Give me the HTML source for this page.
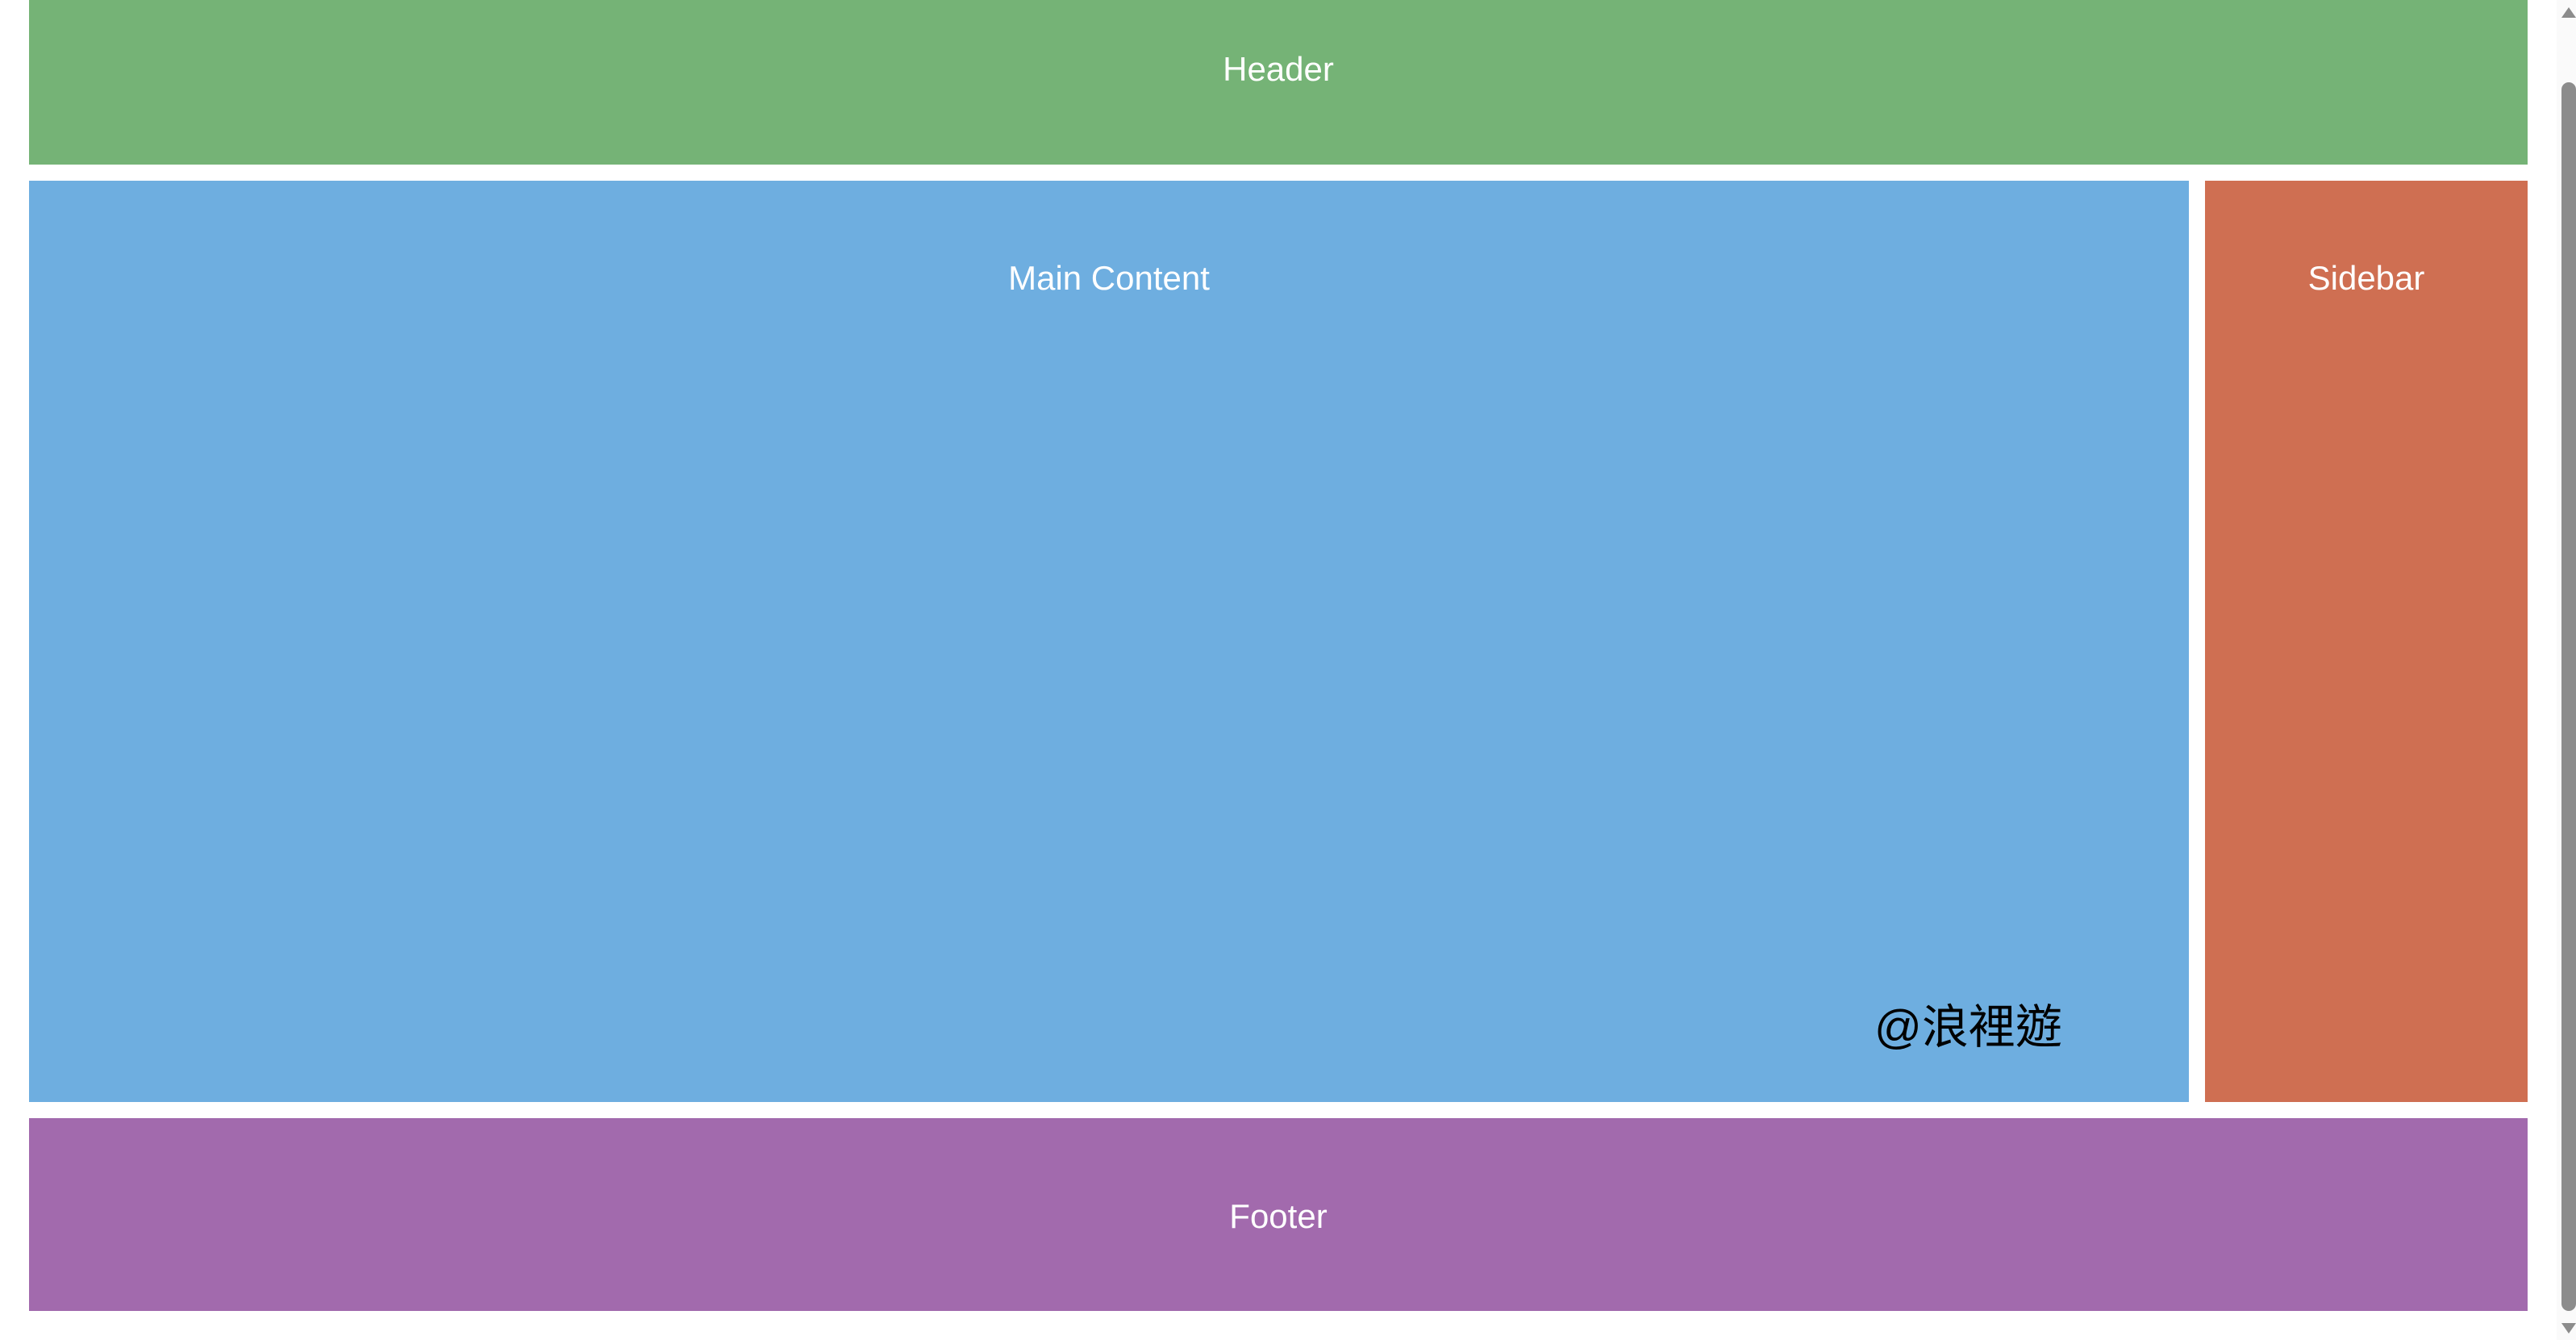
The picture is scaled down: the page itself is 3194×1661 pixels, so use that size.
<!DOCTYPE html>
<html><head><meta charset="utf-8"><style>
html,body{margin:0;padding:0;width:3194px;height:1661px;overflow:hidden;background:#fff;position:relative}
.b{position:absolute}
.t{position:absolute;left:0;right:0;text-align:center;color:#fff;font-family:"Liberation Sans","DejaVu Sans",sans-serif;font-size:42px;line-height:48px;white-space:nowrap}
</style></head><body>
<div class="b" style="left:36px;top:0;width:3098px;height:204px;background:#75b376"><div class="t" style="top:62px">Header</div></div>
<div class="b" style="left:36px;top:224px;width:2678px;height:1142px;background:#6eaee0"><div class="t" style="top:97px">Main Content</div>
<div style="position:absolute;left:2288px;top:1021px;font-family:'Liberation Sans','Noto Sans CJK TC',sans-serif;font-size:58px;line-height:58px;color:#000;white-space:nowrap">@浪裡遊</div></div>
<div class="b" style="left:2734px;top:224px;width:400px;height:1142px;background:#cf6f52"><div class="t" style="top:97px">Sidebar</div></div>
<div class="b" style="left:36px;top:1386px;width:3098px;height:239px;background:#a26aad"><div class="t" style="top:98px">Footer</div></div>
<div class="b" style="left:3170px;top:0;width:24px;height:1661px;background:#fafafa"></div>
<div class="b" style="left:3176px;top:102px;width:18px;height:1523px;background:#8c8c8c;border-radius:9px"></div>
<div class="b" style="left:3176px;top:9px;width:0;height:0;border-left:9px solid transparent;border-right:9px solid transparent;border-bottom:13px solid #8c8c8c"></div>
<div class="b" style="left:3176px;top:1640px;width:0;height:0;border-left:9px solid transparent;border-right:9px solid transparent;border-top:13px solid #8c8c8c"></div>
</body></html>
